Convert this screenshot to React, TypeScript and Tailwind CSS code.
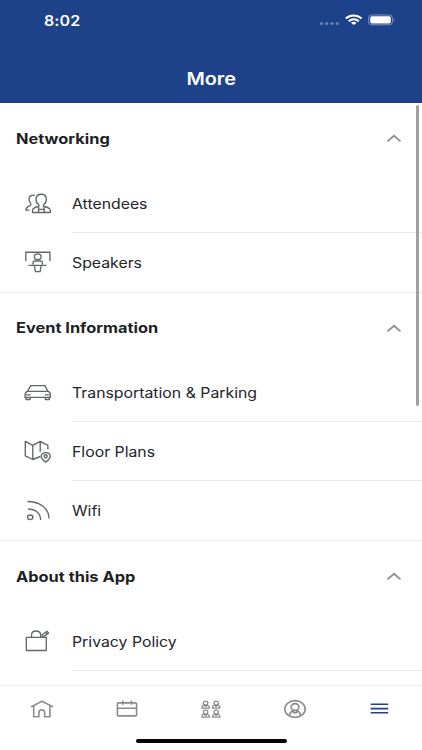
import { useState, type ReactNode } from 'react';

interface MenuItem {
  label: string;
  icon: ReactNode;
}

interface MenuSection {
  title: string;
  items: MenuItem[];
  continues?: boolean;
}

// 28x28 outline icon used in the menu rows
function RowIcon({ children }: { children: ReactNode }) {
  return (
    <svg
      width="28"
      height="28"
      viewBox="0 0 28 28"
      fill="none"
      stroke="#646769"
      strokeWidth="1.35"
      strokeLinejoin="round"
      className="shrink-0"
    >
      {children}
    </svg>
  );
}

function TabIcon({ children, active = false }: { children: ReactNode; active?: boolean }) {
  return (
    <svg
      width="26"
      height="20"
      viewBox="0 0 26 20"
      fill="none"
      stroke={active ? '#1d4289' : '#8a8b8d'}
      strokeWidth="1.6"
      strokeLinejoin="round"
    >
      {children}
    </svg>
  );
}

const sections: MenuSection[] = [
  {
    title: 'Networking',
    items: [
      {
        label: 'Attendees',
        icon: (
          <RowIcon>
            <path d="M14.9 17.8v-2.1c-1.6-1-2.9-3-2.9-5.3 0-3.1 2-5.2 5.2-5.2s5.2 2.1 5.2 5.2c0 2.3-1.3 4.3-2.9 5.3v2.1" />
            <path d="M14.6 17.4c-3.2.8-6.1 1.4-6.1 4v2.1h17.8v-2.1c0-2.6-2.9-3.2-6.1-4M14.6 17.4v6M20.2 17.4v6M14.8 20.4h5.2" />
            <path d="M10.9 6.4C7.5 5.6 5 7.2 5 10.2c0 2.4 1.9 3.6 1.9 5.3 0 2.2-5 1.2-5 5.6h3.6" />
          </RowIcon>
        ),
      },
      {
        label: 'Speakers',
        icon: (
          <RowIcon>
            <path d="M1.8 13V4.2h24.1V13" />
            <ellipse cx="13.7" cy="8.7" rx="3.4" ry="2.9" />
            <path d="M9 16.6v-2.1c0-1 .8-1.5 1.8-1.5h5.8c1 0 1.8.5 1.8 1.5v2.1M4.5 17.3h18M10.3 17.5l1.1 6.1h4.7l1.1-6.1" />
          </RowIcon>
        ),
      },
    ],
  },
  {
    title: 'Event Information',
    items: [
      {
        label: 'Transportation & Parking',
        icon: (
          <RowIcon>
            <path d="M3.6 12.3l3-5.7h14.3l3 5.7M3.6 12.3h20.3c1.6.5 2.5 1.6 2.5 3.2v2.9H1.1v-2.9c0-1.6.9-2.7 2.5-3.2z" />
            <path d="M2.1 18.4v2.1h4v-2.1M21.4 18.4v2.1h4v-2.1M2 15.8h4.7M20.8 15.8h4.7" />
          </RowIcon>
        ),
      },
      {
        label: 'Floor Plans',
        icon: (
          <RowIcon>
            <path d="M16.4 18.5l-7.6 3-7.5-3.6V3.3l7.5 4.1 7.4-4.1 7.7 4.1v3.9M8.8 7.4v14M16.2 3.3v10.4" />
            <path d="M21.7 24.2c-2.2-2-4.5-3.7-4.5-5.8 0-2.2 1.9-3.8 4.5-3.8s4.5 1.6 4.5 3.8c0 2.1-2.3 3.8-4.5 5.8z" />
            <circle cx="21.7" cy="18.2" r="1.5" />
          </RowIcon>
        ),
      },
      {
        label: 'Wifi',
        icon: (
          <RowIcon>
            <ellipse cx="6.2" cy="20.3" rx="2.7" ry="2.3" />
            <path d="M4 12c7.4 0 12.6 4.4 12.6 11M3.4 4.5C16 4.5 25 11.5 25 21.6" />
          </RowIcon>
        ),
      },
    ],
  },
  {
    title: 'About this App',
    continues: true,
    items: [
      {
        label: 'Privacy Policy',
        icon: (
          <RowIcon>
            <path d="M2.3 10.3h20v13.2h-20zM7.5 10.1V8.4C7.5 5.8 9.3 4 12 4s4.7 1.8 4.7 4.4v1.7" />
            <path d="M18.4 9.2l-.2-1.7 4.9-3.1 1.5 1.7-4.7 3.3zM21.6 5.4l1.4 1.8" />
          </RowIcon>
        ),
      },
    ],
  },
];

function Chevron({ open }: { open: boolean }) {
  return (
    <svg width="16" height="10" viewBox="0 0 16 10" fill="none" className={open ? '' : 'rotate-180'}>
      <path d="M1.5 8.4L8 2.7l6.5 5.7" stroke="#8e8f91" strokeWidth="1.8" />
    </svg>
  );
}

function StatusBar() {
  return (
    <div className="flex h-10 items-center justify-between pl-11 pr-[26px]">
      <span className="inline-block origin-left scale-x-[1.14] text-[14px] font-semibold tracking-[0.1px]">8:02</span>
      <svg width="78" height="14" viewBox="0 0 78 14" fill="none">
        <g fill="#6b83b3">
          <circle cx="3.5" cy="10.5" r="1.6" />
          <circle cx="8.8" cy="10.5" r="1.6" />
          <circle cx="14" cy="10.5" r="1.6" />
          <circle cx="19.3" cy="10.5" r="1.6" />
        </g>
        <path d="M27.8 5.5c4.7-4 11.2-4 15.9 0" stroke="white" strokeWidth="2.1" />
        <path d="M30.7 8.2c3-2.5 7.1-2.5 10.1 0" stroke="white" strokeWidth="2" />
        <path d="M32.9 9.7c1.7-1.3 4-1.3 5.7 0l-2.8 2.4z" fill="white" />
        <rect x="50.6" y="2" width="23.8" height="9.8" rx="3" stroke="#7f94bf" />
        <rect x="52.2" y="3.3" width="20.6" height="7.2" rx="1.7" fill="white" />
        <path d="M75.6 5.4c1.5.4 1.5 2.8 0 3.2z" fill="#7f94bf" />
      </svg>
    </div>
  );
}

function Section({ section }: { section: MenuSection }) {
  const [open, setOpen] = useState(true);

  return (
    <section>
      <button
        onClick={() => setOpen(!open)}
        className="flex h-[70.5px] w-full items-center justify-between pl-4 pr-5"
      >
        <span className="inline-block origin-left scale-x-[1.17] text-[14px] font-bold text-[#1d1f24]">
          {section.title}
        </span>
        <Chevron open={open} />
      </button>
      {open &&
        section.items.map((item, idx) => {
          // The closing row of a section gets a full-width divider
          const isLast = idx === section.items.length - 1 && !section.continues;

          return (
            <div
              key={item.label}
              className={`flex items-center border-[#e9e9ea] pl-6 ${isLast ? 'h-[60px] border-b' : 'h-[59px]'}`}
            >
              {item.icon}
              <div
                className={`ml-[19.5px] flex h-full flex-1 items-center border-b pt-px ${
                  isLast ? 'border-transparent' : 'border-[#e9e9ea]'
                }`}
              >
                <span className="inline-block origin-left scale-x-[1.13] whitespace-nowrap text-[14px] text-[#232429]">
                  {item.label}
                </span>
              </div>
            </div>
          );
        })}
    </section>
  );
}

// Small bust used four times in the group tab
function Bust({ x, y }: { x: number; y: number }) {
  return (
    <g transform={`translate(${x} ${y})`} strokeWidth="1.25">
      <ellipse cx="4" cy="2.5" rx="2.2" ry="2" />
      <path d="M2.8 4.5C1.2 4.9.2 5.6.2 7.5h7.6c0-1.9-1-2.6-2.6-3M3.4 4.6v1.2h1.2V4.6" />
    </g>
  );
}

function TabBar() {
  return (
    <nav className="flex h-[65px] shrink-0 flex-col items-center border-t border-[#ededee] bg-white">
      <div className="grid h-[46px] w-full grid-cols-5 place-items-center">
        <TabIcon>
          <path d="M2 7.9L13 2.3l11 5.6M4.7 6.7v11.1h5.2v-4.1c0-2 1.1-2.9 2.9-2.9s2.9.9 2.9 2.9v4.1h5.2V6.7" />
        </TabIcon>
        <TabIcon>
          <rect x="3.4" y="3.9" width="19.2" height="13" rx="1" />
          <path d="M3.4 9.2h19.2M8.8 1.7v4M17.3 1.7v4" />
        </TabIcon>
        <TabIcon>
          <Bust x={3.6} y={1.5} />
          <Bust x={14.2} y={1.5} />
          <Bust x={3.6} y={10.5} />
          <Bust x={14.2} y={10.5} />
        </TabIcon>
        <TabIcon>
          <ellipse cx="13" cy="10" rx="10.2" ry="8.4" />
          <ellipse cx="13" cy="8" rx="3.9" ry="3.4" />
          <path d="M7.6 16.9c.1-2.7 1.3-4.5 3.7-5.4v2.1h3.5v-2.1c2.4.9 3.6 2.7 3.7 5.4" />
        </TabIcon>
        <TabIcon active>
          <path d="M3.7 5.3h17.5M3.7 9.6h17.5M3.7 13.8h17.5" />
        </TabIcon>
      </div>
      <div className="mt-[7px] h-1 w-[151px] rounded-full bg-black" />
    </nav>
  );
}

export default function App() {
  return (
    <div className="flex h-[750px] w-[422px] flex-col overflow-hidden bg-white font-['Inter',sans-serif]">
      <header className="h-[103px] shrink-0 bg-[#1d4289] text-white">
        <StatusBar />
        <h1 className="flex h-[78px] items-center justify-center text-[17px] font-semibold">
          <span className="inline-block translate-y-px scale-x-[1.17]">More</span>
        </h1>
      </header>

      <main className="relative min-h-0 flex-1 overflow-hidden">
        {sections.map((section) => (
          <Section key={section.title} section={section} />
        ))}
        {/* Scroll indicator */}
        <div className="absolute right-[3px] top-[2px] h-[301px] w-[3px] rounded-full bg-[#a1a1a1]" />
      </main>

      <TabBar />
    </div>
  );
}
